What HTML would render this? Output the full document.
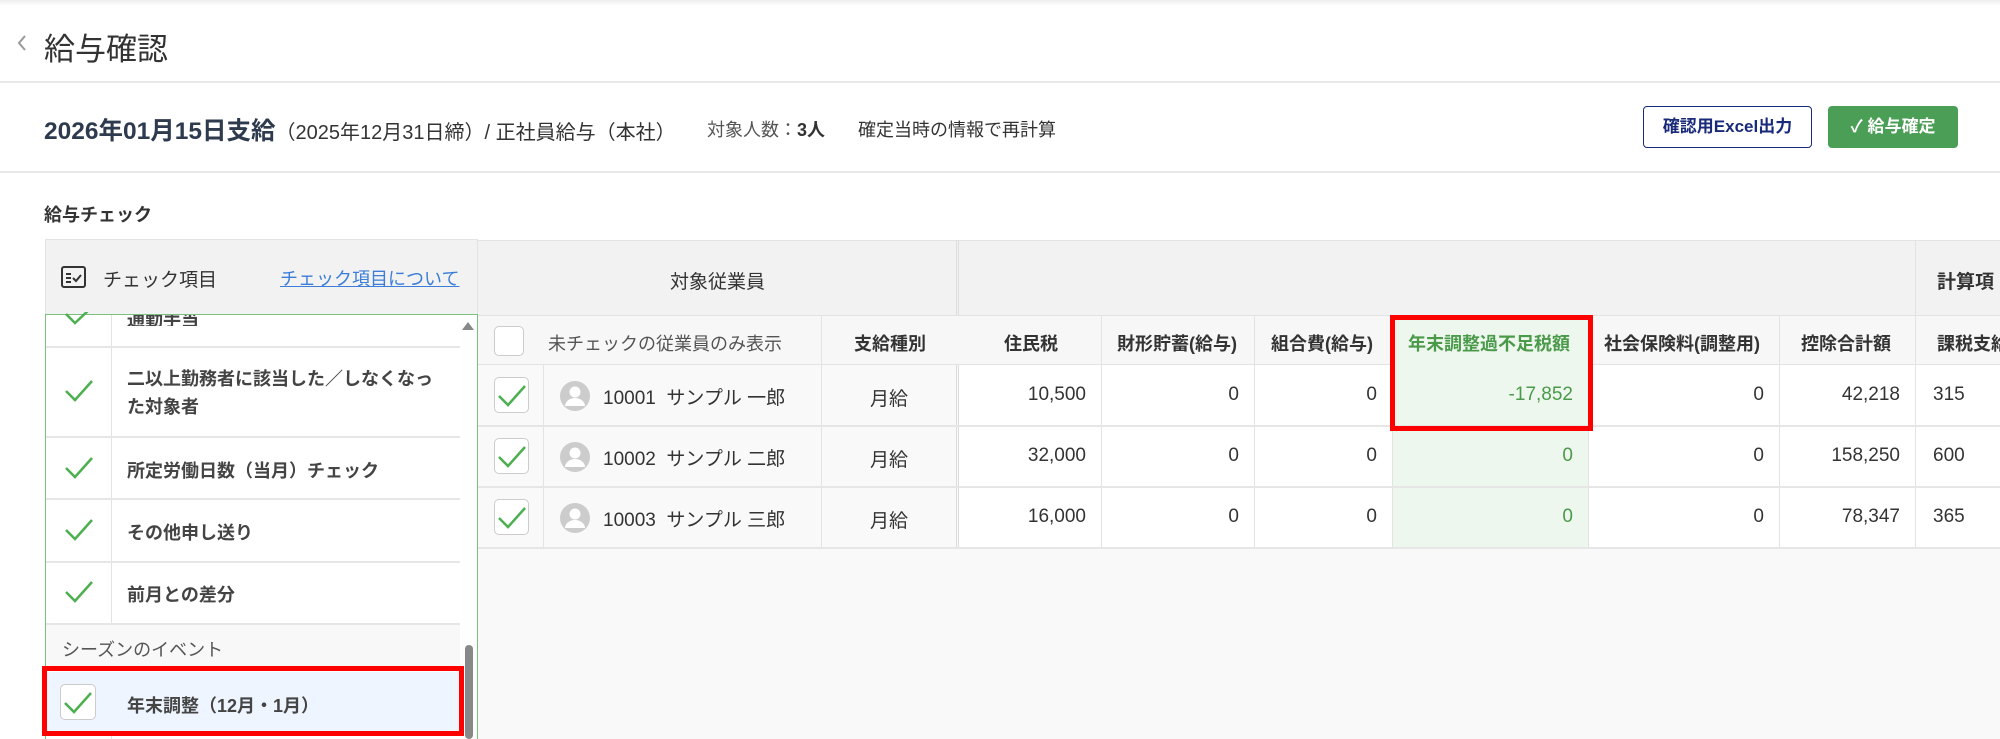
<!DOCTYPE html>
<html><head><meta charset="utf-8"><style>
*{margin:0;padding:0;box-sizing:border-box}
body{width:2000px;height:739px;overflow:hidden;background:#fff;font-family:"Liberation Sans","Noto Sans CJK JP",sans-serif;color:#333;position:relative}
.a{position:absolute}
.hl{position:absolute;left:0;width:2000px;height:2px;background:#e8e8e8}
.t{font-size:18px;white-space:nowrap}
.b{font-weight:bold}
.vl{position:absolute;width:1px;background:#e3e3e3}
.hr{position:absolute;height:2px;background:#e6e6e6}
.num{position:absolute;font-size:19px;text-align:right;white-space:nowrap}
.cb{position:absolute;width:36px;height:36px;border:1px solid #ccc;border-radius:5px;background:#fff}
</style></head><body>
<div class="a" style="left:0;top:0;width:2000px;height:6px;background:linear-gradient(#eee,#fff)"></div>
<svg class="a" style="left:16px;top:34px" width="12" height="18"><path d="M9 2 L3 9 L9 16" stroke="#999" stroke-width="2" fill="none"/></svg>
<div class="a" style="left:44px;top:24px;font-size:31px;color:#333">給与確認</div>
<div class="hl" style="top:81px"></div>
<div class="a t" style="left:44px;top:112px"><span class="b" style="font-size:24.5px;color:#2e3a4d">2026年01月15日支給</span><span style="font-size:20px">（2025年12月31日締）/ 正社員給与（本社）</span></div>
<div class="a t" style="left:707px;top:116px;color:#555">対象人数：<b style="color:#333">3人</b></div>
<div class="a t" style="left:858px;top:116px">確定当時の情報で再計算</div>
<div class="a" style="left:1643px;top:106px;width:169px;height:42px;border:1.5px solid #1a2a7a;border-radius:4px;color:#1a2a7a;font-size:17px;font-weight:bold;text-align:center;line-height:39px">確認用Excel出力</div>
<div class="a" style="left:1828px;top:106px;width:130px;height:42px;background:#4a9e55;border-radius:4px;color:#fff;font-size:17px;font-weight:bold;text-align:center;line-height:42px">✓ 給与確定</div>
<div class="hl" style="top:171px"></div>
<div class="a t b" style="left:44px;top:201px">給与チェック</div>

<div class="a" style="left:45px;top:239px;width:433px;height:76px;background:#f2f2f2;border:1px solid #e3e3e3"></div>
<svg class="a" style="left:61px;top:266px" width="25" height="22"><rect x="1" y="1" width="23" height="20" rx="2" fill="none" stroke="#333" stroke-width="2"/><path d="M5 8h5M5 12h5M5 16h5M12 12l3 3 5-6" stroke="#333" stroke-width="2" fill="none"/></svg>
<div class="a t" style="left:103px;top:265px;font-size:19px">チェック項目</div>
<div class="a t" style="left:280px;top:265px;color:#3b7dd8;text-decoration:underline">チェック項目について</div>
<div class="a" style="left:45px;top:314px;width:433px;height:425px;border:1px solid #7cc07f;border-bottom:none;background:#fff"></div>
<div class="vl" style="left:111px;top:315px;height:309px"></div>
<div class="vl" style="left:111px;top:672px;height:67px"></div>
<svg class="a" style="left:64px;top:312px" width="30" height="14"><path d="M2 2 L11 11 L27 -4" stroke="#4caf50" stroke-width="2.5" fill="none"/></svg>
<div class="a t b" style="left:127px;top:306px;color:#444;height:20px;overflow:hidden;clip-path:inset(9px 0 0 0)">通勤手当</div>
<div class="hr" style="left:46px;top:346px;width:414px"></div>
<div class="a t b" style="left:127px;top:365px;color:#444;line-height:28px">二以上勤務者に該当した／しなくなっ<br>た対象者</div>
<div class="hr" style="left:46px;top:436px;width:414px"></div>
<div class="a t b" style="left:127px;top:457px;color:#444">所定労働日数（当月）チェック</div>
<div class="hr" style="left:46px;top:498px;width:414px"></div>
<div class="a t b" style="left:127px;top:519px;color:#444">その他申し送り</div>
<div class="hr" style="left:46px;top:561px;width:414px"></div>
<div class="a t b" style="left:127px;top:581px;color:#444">前月との差分</div>
<div class="hr" style="left:46px;top:623px;width:414px"></div>
<div class="a" style="left:46px;top:625px;width:414px;height:46px;background:#f8f8f8"></div>
<div class="a t" style="left:62px;top:636px;color:#555">シーズンのイベント</div>
<div class="a" style="left:46px;top:672px;width:414px;height:64px;background:#eef5ff"></div>
<svg class="a" style="left:64px;top:378px" width="30" height="26"><path d="M2 13 L11 22 L28 3" stroke="#4caf50" stroke-width="2.5" fill="none"/></svg>
<svg class="a" style="left:64px;top:455px" width="30" height="26"><path d="M2 13 L11 22 L28 3" stroke="#4caf50" stroke-width="2.5" fill="none"/></svg>
<svg class="a" style="left:64px;top:517px" width="30" height="26"><path d="M2 13 L11 22 L28 3" stroke="#4caf50" stroke-width="2.5" fill="none"/></svg>
<svg class="a" style="left:64px;top:579px" width="30" height="26"><path d="M2 13 L11 22 L28 3" stroke="#4caf50" stroke-width="2.5" fill="none"/></svg>
<div class="cb" style="left:60px;top:684px"></div>
<svg class="a" style="left:63px;top:690px" width="30" height="26"><path d="M2 13 L11 22 L28 3" stroke="#4caf50" stroke-width="2.5" fill="none"/></svg>
<div class="a t b" style="left:127px;top:692px;color:#444">年末調整（12月・1月）</div>
<div class="a" style="left:42px;top:666px;width:422px;height:70px;border:5px solid #f00"></div>
<svg class="a" style="left:462px;top:320px" width="12" height="10"><path d="M0 10 L6 2 L12 10Z" fill="#888"/></svg>
<div class="a" style="left:465px;top:645px;width:8px;height:94px;background:#888;border-radius:4px"></div>

<div class="a" style="left:478px;top:240px;width:1522px;height:499px;background:#f9f9f9"></div>
<div class="a" style="left:478px;top:240px;width:1522px;height:76px;background:#f2f2f2;border-top:1px solid #e3e3e3"></div>
<div class="a t" style="left:670px;top:267px;font-size:19px">対象従業員</div>
<div class="a" style="left:956px;top:240px;width:3px;height:308px;border-left:1px solid #ddd;border-right:1px solid #ddd"></div>
<div class="vl" style="left:1915px;top:240px;height:76px"></div>
<div class="a t b" style="left:1937px;top:267px;font-size:19px">計算項</div>
<div class="a" style="left:478px;top:315px;width:1522px;height:50px;background:#f7f7f7;border-top:1px solid #e3e3e3;border-bottom:1px solid #e3e3e3"></div>
<div class="a" style="left:959px;top:365px;width:1041px;height:183px;background:#fff"></div>
<div class="a" style="left:1392px;top:316px;width:196px;height:232px;background:#eef7ee"></div>
<div class="cb" style="left:494px;top:326px;width:30px;height:30px"></div>
<div class="a t" style="left:548px;top:330px;color:#555">未チェックの従業員のみ表示</div>
<div class="a t b" style="left:854px;top:330px">支給種別</div>
<div class="a t b" style="left:1004px;top:330px">住民税</div>
<div class="a t b" style="left:1117px;top:330px">財形貯蓄(給与)</div>
<div class="a t b" style="left:1271px;top:330px">組合費(給与)</div>
<div class="a t b" style="left:1408px;top:330px;color:#4a9a4a">年末調整過不足税額</div>
<div class="a t b" style="left:1604px;top:330px">社会保険料(調整用)</div>
<div class="a t b" style="left:1801px;top:330px">控除合計額</div>
<div class="a t b" style="left:1937px;top:330px">課税支給</div>
<div class="vl" style="left:543px;top:365px;height:183px"></div>
<div class="vl" style="left:821px;top:316px;height:232px"></div>
<div class="vl" style="left:1101px;top:316px;height:232px"></div>
<div class="vl" style="left:1254px;top:316px;height:232px"></div>
<div class="vl" style="left:1392px;top:316px;height:232px"></div>
<div class="vl" style="left:1588px;top:316px;height:232px"></div>
<div class="vl" style="left:1779px;top:316px;height:232px"></div>
<div class="vl" style="left:1915px;top:316px;height:232px"></div>
<div class="hr" style="left:478px;top:425px;width:1522px"></div>
<div class="hr" style="left:478px;top:486px;width:1522px"></div>
<div class="hr" style="left:478px;top:547px;width:1522px"></div>

<div class="cb" style="left:494px;top:377px;width:35px;height:36px"></div>
<svg class="a" style="left:497px;top:383px" width="30" height="26"><path d="M2 13 L11 22 L28 3" stroke="#4caf50" stroke-width="2.5" fill="none"/></svg>
<div class="cb" style="left:494px;top:438px;width:35px;height:36px"></div>
<svg class="a" style="left:497px;top:444px" width="30" height="26"><path d="M2 13 L11 22 L28 3" stroke="#4caf50" stroke-width="2.5" fill="none"/></svg>
<div class="cb" style="left:494px;top:499px;width:35px;height:36px"></div>
<svg class="a" style="left:497px;top:505px" width="30" height="26"><path d="M2 13 L11 22 L28 3" stroke="#4caf50" stroke-width="2.5" fill="none"/></svg>

<svg class="a" style="left:559px;top:380px" width="32" height="32"><circle cx="16" cy="16" r="15" fill="#ccc"/><circle cx="16" cy="12" r="5.5" fill="#fff"/><path d="M6 26 a10 8 0 0 1 20 0" fill="#fff"/></svg>
<svg class="a" style="left:559px;top:441px" width="32" height="32"><circle cx="16" cy="16" r="15" fill="#ccc"/><circle cx="16" cy="12" r="5.5" fill="#fff"/><path d="M6 26 a10 8 0 0 1 20 0" fill="#fff"/></svg>
<svg class="a" style="left:559px;top:502px" width="32" height="32"><circle cx="16" cy="16" r="15" fill="#ccc"/><circle cx="16" cy="12" r="5.5" fill="#fff"/><path d="M6 26 a10 8 0 0 1 20 0" fill="#fff"/></svg>
<div class="a t" style="left:603px;top:383px;font-size:19px">10001&nbsp;&nbsp;サンプル 一郎</div>
<div class="a t" style="left:603px;top:444px;font-size:19px">10002&nbsp;&nbsp;サンプル 二郎</div>
<div class="a t" style="left:603px;top:505px;font-size:19px">10003&nbsp;&nbsp;サンプル 三郎</div>
<div class="a t" style="left:870px;top:384px;font-size:19px">月給</div>
<div class="a t" style="left:870px;top:445px;font-size:19px">月給</div>
<div class="a t" style="left:870px;top:506px;font-size:19px">月給</div>

<div class="num" style="right:914px;top:384px">10,500</div>
<div class="num" style="right:914px;top:445px">32,000</div>
<div class="num" style="right:914px;top:506px">16,000</div>
<div class="num" style="right:761px;top:384px">0</div>
<div class="num" style="right:761px;top:445px">0</div>
<div class="num" style="right:761px;top:506px">0</div>
<div class="num" style="right:623px;top:384px">0</div>
<div class="num" style="right:623px;top:445px">0</div>
<div class="num" style="right:623px;top:506px">0</div>
<div class="num" style="right:427px;top:384px;color:#4a9a4a">-17,852</div>
<div class="num" style="right:427px;top:445px;color:#4a9a4a">0</div>
<div class="num" style="right:427px;top:506px;color:#4a9a4a">0</div>
<div class="num" style="right:236px;top:384px">0</div>
<div class="num" style="right:236px;top:445px">0</div>
<div class="num" style="right:236px;top:506px">0</div>
<div class="num" style="right:100px;top:384px">42,218</div>
<div class="num" style="right:100px;top:445px">158,250</div>
<div class="num" style="right:100px;top:506px">78,347</div>
<div class="num" style="left:1933px;top:384px;text-align:left">315</div>
<div class="num" style="left:1933px;top:445px;text-align:left">600</div>
<div class="num" style="left:1933px;top:506px;text-align:left">365</div>

<div class="a" style="left:1390px;top:315px;width:203px;height:116px;border:5px solid #f00"></div>
</body></html>
